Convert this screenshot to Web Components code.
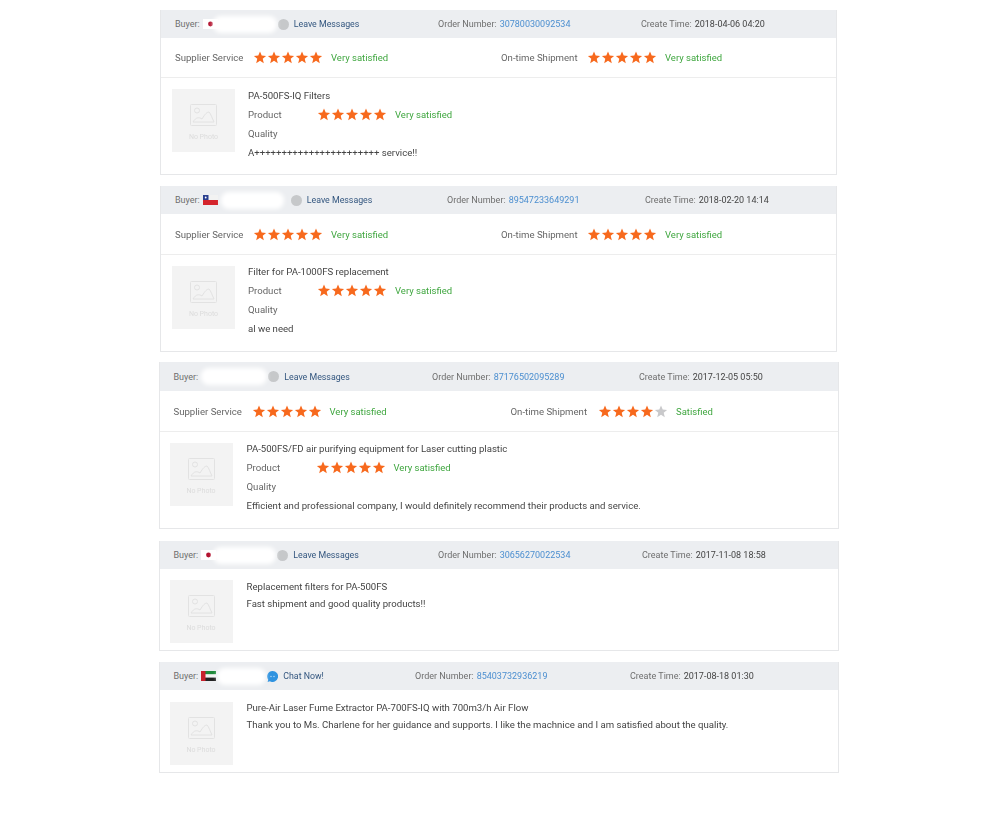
<!DOCTYPE html>
<html>
<head>
<meta charset="utf-8">
<title>Reviews</title>
<style>
  html, body { margin: 0; background: #fff; }
  body { font-family: Roboto, "Liberation Sans", sans-serif; font-size: 10px; color: #555; }
</style>
</head>
<body>
<review-list>
  <review-card style="--mx:160px;--w:677px;--mb:11px;--body-h:96px;--order:203px;--time:195px;--left:326px"
    flag="jp" order="30780030092534" time="2018-04-06 04:20" blob="64" blob-left="-5" blob-gap="1" link="Leave Messages"
    supplier="5" shipment="5" product="5">
    <span slot="title">PA-500FS-IQ Filters</span>
    A+++++++++++++++++++++++ service!!
  </review-card>
  <review-card style="--mx:160px;--w:677px;--mb:10px;--body-h:96px;--row:41px;--text-top:-4px;--order:198px;--time:191px;--left:326px"
    flag="cl" order="89547233649291" time="2018-02-20 14:14" blob="63" blob-left="3" blob-gap="7" link="Leave Messages"
    supplier="5" shipment="5" product="5">
    <span slot="title">Filter for PA-1000FS replacement</span>
    al we need
  </review-card>
  <review-card style="--mx:158.5px;--w:680px;--mb:12px;--body-h:96px;--head:29px;--row:41px;--text-top:-4px;--order:207px;--time:198.5px;--left:337px;--lab2:87.5px;--img:10px;--text-left:14px"
    order="87176502095289" time="2017-12-05 05:50" blob="66" blob-left="3" blob-gap="1" link="Leave Messages"
    supplier="5" shipment="4" product="5" ship-label="Satisfied">
    <span slot="title">PA-500FS/FD air purifying equipment for Laser cutting plastic</span>
    Efficient and professional company, I would definitely recommend their products and service.
  </review-card>
  <review-card style="--mx:158.5px;--w:680px;--mb:11px;--body-h:81px;--order:204px;--time:195.5px;--img:10px;--text-left:14px"
    flag="jp" order="30656270022534" time="2017-11-08 18:58" blob="63" blob-left="-3" blob-gap="1" link="Leave Messages">
    <span slot="title">Replacement filters for PA-500FS</span>
    Fast shipment and good quality products!!
  </review-card>
  <review-card style="--mx:158.5px;--w:680px;--mb:0px;--body-h:82px;--img-top:12px;--text-top:-4px;--order:215px;--time:207.5px;--img:10px;--text-left:14px"
    flag="ae" order="85403732936219" time="2017-08-18 01:30" blob="49" blob-left="1" blob-gap="1" link="Chat Now!" online>
    <span slot="title">Pure-Air Laser Fume Extractor PA-700FS-IQ with 700m3/h Air Flow</span>
    Thank you to Ms. Charlene for her guidance and supports. I like the machnice and I am satisfied about the quality.
  </review-card>
</review-list>

<script>
(function() {

    // Row of five stars, "value" of them lit
    class StarRating extends HTMLElement {
        constructor() {
            super();
            this.attachShadow({mode: 'open'});
        }
        connectedCallback() {
            var value = parseInt(this.getAttribute('value'), 10);
            var label = this.getAttribute('label') || 'Very satisfied';
            var stars = '';
            for (var i = 0; i < 5; i++) {
                stars += '<svg width="14" height="13" viewBox="0 0 14 13"><polygon fill="' + (i < value ? '#f7691d' : '#c9c9cb') +
                    '" points="7,0.4 8.7,4.6 13.1,4.9 9.7,7.8 10.8,12.2 7,9.8 3.2,12.2 4.3,7.8 0.9,4.9 5.3,4.6"/></svg>';
            }
            this.shadowRoot.innerHTML = `
                <style>
                  :host { display: inline-flex; align-items: center; }
                  .stars { display: flex; width: 78px; }
                  svg { display: block; flex: none; }
                  .label { color: #3fa63f; font-size: 9.5px; }
                </style>
                <div class="stars">${stars}</div>
                <span class="label">${label}</span>`;
        }
    }

    // Grey placeholder with the mountain picture icon
    class NoPhoto extends HTMLElement {
        constructor() {
            super();
            this.attachShadow({mode: 'open'});
            this.shadowRoot.innerHTML = `
                <style>
                  :host { display: flex; flex-direction: column; align-items: center; flex: none;
                          width: 63px; height: 63px; background: #f3f3f3; box-sizing: border-box; padding-top: 15px; }
                  svg { display: block; }
                  span { font-size: 7px; color: #dcdcdc; margin-top: 7px; line-height: 8px; }
                </style>
                <svg width="27" height="22" viewBox="0 0 27 22" fill="none" stroke="#e2e2e2" stroke-width="1">
                  <rect x="0.5" y="0.5" width="26" height="21" rx="1"/>
                  <circle cx="7" cy="6.5" r="2.5"/>
                  <path d="M3 18c3-5 6-5 9-3 3-5 5-7 7-7 2 2 3 6 5 10z"/>
                </svg>
                <span>No Photo</span>`;
        }
    }

    const FLAGS = {
        jp: '<rect width="15" height="10" fill="#fff"/><circle cx="7.5" cy="5" r="2.4" fill="#b3122f"/>',
        cl: '<rect width="15" height="5" fill="#f2f2f2"/><rect y="5" width="15" height="5" fill="#d4242c"/><rect width="5.5" height="5" fill="#2a3f8f"/><circle cx="2.7" cy="2.5" r="0.9" fill="#fff"/>',
        ae: '<rect width="15" height="3.4" fill="#1f8a3b"/><rect y="3.4" width="15" height="3.2" fill="#f4f4f4"/><rect y="6.6" width="15" height="3.4" fill="#222"/><rect width="4.5" height="10" fill="#c8202c"/>'
    };

    // Grey strip: buyer, order number, create time
    class CardHeader extends HTMLElement {
        constructor() {
            super();
            this.attachShadow({mode: 'open'});
        }
        connectedCallback() {
            var a = this;
            var flag = a.getAttribute('flag');
            var online = a.hasAttribute('online');
            var flagSvg = flag ? '<svg class="flag" width="15" height="10" viewBox="0 0 15 10">' + FLAGS[flag] + '</svg>' : '';
            var bubble = online
                ? '<svg class="dot" width="11" height="11" viewBox="0 0 11 11"><path fill="#2f93e0" d="M5.5 0a5.5 5.5 0 1 1-2.6 10.3L0.6 11l0.6-2.3A5.5 5.5 0 0 1 5.5 0z"/><circle cx="4" cy="5.5" r=".7" fill="#bfe0f7"/><circle cx="7" cy="5.5" r=".7" fill="#bfe0f7"/></svg>'
                : '<svg class="dot" width="11" height="11" viewBox="0 0 11 11"><circle cx="5.5" cy="5.5" r="5.5" fill="#c6c8ca"/></svg>';
            this.shadowRoot.innerHTML = `
                <style>
                  :host { display: flex; align-items: center; height: var(--head, 28px); background: #eceef1; padding-left: 14px; font-size: 9px; color: #6e6e6e; }
                  .who { display: flex; align-items: center; flex: none; }
                  .who svg { display: block; flex: none; }
                  .flag { margin-left: 3px; }
                  .blob { height: 17px; background: #fff; border-radius: 8px; filter: blur(2px); flex: none; }
                  .link { color: #33567f; white-space: nowrap; margin-left: 5px; margin-right: auto; font-size: 8.8px; }
                  .order { flex: none; width: var(--order); white-space: nowrap; }
                  .order a { color: #4c8fd0; margin-left: 3px; }
                  .time { flex: none; width: var(--time); white-space: nowrap; }
                  .time b { font-weight: 400; color: #444; margin-left: 3px; }
                </style>
                <span>Buyer:</span>
                <span class="who">${flagSvg}
                  <span class="blob" style="width:${a.getAttribute('blob')}px;margin-left:${a.getAttribute('blob-left')}px;margin-right:${a.getAttribute('blob-gap')}px"></span>
                  ${bubble}
                </span>
                <span class="link">${a.getAttribute('link')}</span>
                <span class="order">Order Number:<a>${a.getAttribute('order')}</a></span>
                <span class="time">Create Time:<b>${a.getAttribute('time')}</b></span>`;
        }
    }

    class ReviewCard extends HTMLElement {
        constructor() {
            super();
            this.attachShadow({mode: 'open'});
        }
        connectedCallback() {
            var a = this;
            var h = document.createElement('card-header');
            ['flag', 'order', 'time', 'blob', 'blob-left', 'blob-gap', 'link', 'online'].forEach(function (n) {
                if (a.hasAttribute(n)) h.setAttribute(n, a.getAttribute(n));
            });
            var service = '';
            if (a.hasAttribute('supplier')) {
                service = `<div class="service">
                    <div class="col" style="width:var(--left)"><span class="lab1">Supplier Service</span><star-rating value="${a.getAttribute('supplier')}"></star-rating></div>
                    <div class="col"><span class="lab2">On-time Shipment</span><star-rating value="${a.getAttribute('shipment')}" label="${a.getAttribute('ship-label') || 'Very satisfied'}"></star-rating></div>
                </div>`;
            }
            var product = '';
            if (a.hasAttribute('product')) {
                product = `<div class="product"><span>Product</span><star-rating value="${a.getAttribute('product')}"></star-rating></div><div class="line">Quality</div>`;
            }
            var commentGap = product ? '0' : '-2px';
            this.shadowRoot.innerHTML = `
                <style>
                  :host { display: block; box-sizing: border-box; width: var(--w); margin: 0 0 var(--mb) var(--mx);
                          border: 1px solid #e6e7e9; border-top: 0; font-size: 9.6px; color: #555; filter: blur(.3px); }
                  .service { display: flex; align-items: center; height: var(--row, 40px); padding-left: 14px; border-bottom: 1px solid #ededed; box-sizing: border-box; }
                  .col { display: flex; align-items: center; flex: none; white-space: nowrap; color: #666; }
                  .lab1 { width: 78px; flex: none; }
                  .lab2 { width: var(--lab2, 86px); flex: none; }
                  .body { display: flex; height: var(--body-h); box-sizing: border-box; padding: var(--img-top, 11px) 0 0 var(--img, 11px); }
                  .text { margin: var(--text-top, -3px) 0 0 var(--text-left, 13px); min-width: 0; color: #444; }
                  .line, .product { line-height: 19px; height: 19px; }
                  .product { display: flex; align-items: center; color: #666; }
                  .product span { width: 69px; flex: none; }
                  .line { color: #666; }
                  .comment { line-height: 19px; color: #444; margin-top: ${commentGap}; }
                </style>
                <div id="h"></div>
                ${service}
                <div class="body">
                  <no-photo></no-photo>
                  <div class="text">
                    <div class="line" style="color:#444"><slot name="title"></slot></div>
                    ${product}
                    <div class="comment"><slot></slot></div>
                  </div>
                </div>`;
            this.shadowRoot.getElementById('h').replaceWith(h);
        }
    }

    class ReviewList extends HTMLElement {
        constructor() {
            super();
            this.attachShadow({mode: 'open'});
            this.shadowRoot.innerHTML = `
                <style>:host { display: block; padding-top: 10px; }</style>
                <slot></slot>`;
        }
    }

    window.customElements.define('star-rating', StarRating);
    window.customElements.define('no-photo', NoPhoto);
    window.customElements.define('card-header', CardHeader);
    window.customElements.define('review-card', ReviewCard);
    window.customElements.define('review-list', ReviewList);

})();
</script>
</body>
</html>
